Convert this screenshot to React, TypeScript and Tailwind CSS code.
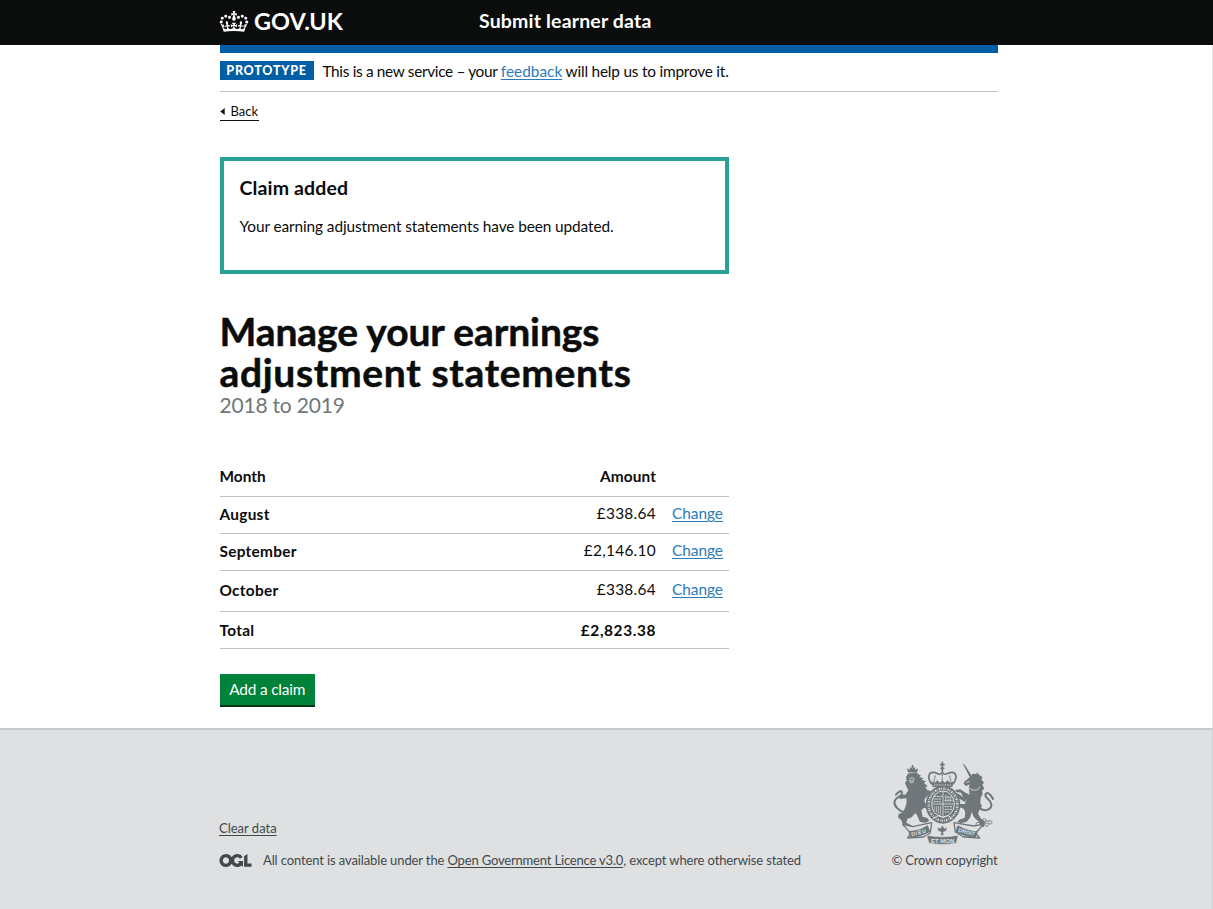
import type { ReactNode } from "react";

const rows = [
  { month: "August", amount: "£338.64", height: "h-[37px]" },
  { month: "September", amount: "£2,146.10", height: "h-[37px]" },
  { month: "October", amount: "£338.64", height: "h-[41px]" },
];

function Link({ children, className = "" }: { children: ReactNode; className?: string }) {
  return (
    <a href="#" className={`text-[#2b7bb9] underline decoration-1 underline-offset-2 ${className}`}>
      {children}
    </a>
  );
}

function Crown() {
  return (
    <svg viewBox="0 0 132 97" className="h-[21px] w-[30px] shrink-0" fill="#fff" aria-hidden="true">
      <path d="M25 30.2c3.5 1.5 7.7-.2 9.1-3.7 1.5-3.6-.2-7.8-3.9-9.2-3.6-1.4-7.6.3-9.1 3.9-1.4 3.5.3 7.5 3.9 9zM9 39.5c3.6 1.5 7.8-.2 9.2-3.7 1.5-3.6-.2-7.8-3.9-9.1-3.6-1.5-7.6.2-9.1 3.8-1.4 3.5.3 7.5 3.8 9zM4.4 57.2c3.5 1.5 7.7-.2 9.1-3.8 1.5-3.6-.2-7.7-3.9-9.1-3.5-1.5-7.6.3-9.1 3.8-1.4 3.5.3 7.6 3.9 9.1zm38.3-21.4c3.5 1.5 7.7-.2 9.1-3.8 1.5-3.6-.2-7.7-3.9-9.1-3.6-1.5-7.6.3-9.1 3.8-1.3 3.6.4 7.7 3.9 9.1zm64.4-5.6c-3.6 1.5-7.8-.2-9.1-3.7-1.5-3.6.2-7.8 3.8-9.2 3.6-1.4 7.7.3 9.2 3.9 1.3 3.5-.4 7.5-3.9 9zm15.9 9.3c-3.6 1.5-7.7-.2-9.1-3.7-1.5-3.6.2-7.8 3.7-9.1 3.6-1.5 7.7.2 9.2 3.8 1.5 3.5-.3 7.5-3.8 9zm4.7 17.7c-3.6 1.5-7.8-.2-9.2-3.8-1.5-3.6.2-7.7 3.9-9.1 3.6-1.5 7.7.3 9.2 3.8 1.3 3.5-.4 7.6-3.9 9.1zM89.3 35.8c-3.6 1.5-7.8-.2-9.2-3.8-1.4-3.6.2-7.7 3.9-9.1 3.6-1.5 7.7.3 9.2 3.8 1.4 3.6-.3 7.7-3.9 9.1zM69.7 17.7l8.9 4.7V9.3l-8.9 2.8c-.2-.3-.5-.6-.9-.9L72.4 0H59.6l3.5 11.2c-.3.3-.6.5-.9.9l-8.8-2.8v13.1l8.8-4.7c.3.3.6.7.9.9l-5 15.4v.1c-.2.8-.4 1.6-.4 2.4 0 4.1 3.1 7.5 7 8.1h.2c.3 0 .7.1 1 .1.4 0 .7 0 1-.1h.2c4-.6 7.1-4.1 7.1-8.1 0-.8-.1-1.7-.4-2.4V34l-5.1-15.4c.4-.2.7-.6 1-.9zM66 92.8c16.9 0 32.8 1.1 47.1 3.2 4-16.9 8.9-26.7 14-33.5l-9.6-3.4c1 4.9 1.1 7.2 0 10.2-1.5-1.4-3-4.3-4.2-8.7L108.6 76c2.8-2 5-3.2 7.5-3.3-4.4 9.4-10 11.9-13.6 11.2-4.3-.8-6.3-4.6-5.6-7.9 1-4.7 5.7-5.9 8-.5 4.3-8.7-3-11.4-7.6-8.8 7.1-7.2 7.9-13.5 2.1-21.1-8 6.1-8.1 12.3-4.5 20.8-4.7-5.4-12.1-2.5-9.5 6.2 3.4-5.2 7.9-2 7.2 3.1-.6 4.3-6.4 7.8-13.5 7.2-10.3-.9-10.9-8-11.2-13.8 2.5-.5 7.1 1.8 11 7.3L80.2 60c-4.1 4.4-8 5.3-12.3 5.4 1.4-4.4 8-11.6 8-11.6H55.5s6.4 7.2 7.9 11.6c-4.2-.1-8-1-12.3-5.4l1.4 16.4c3.9-5.5 8.5-7.7 10.9-7.3-.3 5.8-.9 12.8-11.1 13.8-7.2.6-12.9-2.9-13.5-7.2-.7-5 3.8-8.3 7.1-3.1 2.7-8.7-4.6-11.6-9.4-6.2 3.7-8.5 3.6-14.7-4.6-20.8-5.8 7.6-5 13.9 2.2 21.1-4.7-2.6-11.9.1-7.7 8.8 2.3-5.5 7.1-4.2 8.1.5.7 3.3-1.3 7.1-5.7 7.9-3.5.7-9-1.8-13.5-11.2 2.5.1 4.7 1.3 7.5 3.3l-4.7-15.4c-1.2 4.4-2.7 7.2-4.3 8.7-1.1-3-.9-5.3 0-10.2l-9.5 3.4c5 6.9 9.9 16.7 14 33.5 14.8-2.1 30.8-3.2 47.7-3.2z" />
    </svg>
  );
}

function OglLogo() {
  return (
    <svg viewBox="0 0 483.2 195.7" className="h-[13px] w-[33px] shrink-0" fill="#43494b" aria-hidden="true">
      <path d="M421.5 142.8V.1l-50.7 32.3v161.1h112.4v-50.7zm-122.3-9.6A47.12 47.12 0 0 1 221 97.8c0-26 21.1-47.1 47.1-47.1 16.7 0 31.4 8.7 39.7 21.8l42.7-27.2A97.63 97.63 0 0 0 268.1 0c-36.5 0-68.3 20.1-85.1 49.7A98 98 0 0 0 97.8 0C43.9 0 0 43.9 0 97.8s43.9 97.8 97.8 97.8c36.5 0 68.3-20.1 85.1-49.7a97.76 97.76 0 0 0 149.6 25.4l19.4 22.2h3v-87.8h-80l24.3 27.5zM97.8 145c-26 0-47.1-21.1-47.1-47.1s21.1-47.1 47.1-47.1 47.1 21.1 47.1 47.1S123.8 145 97.8 145" />
    </svg>
  );
}

/* Royal coat of arms: lion and unicorn supporting a crowned shield over a motto ribbon. */
function Crest() {
  return (
    <svg viewBox="24 15 312 255" className="-ml-[2px] h-[85px] w-[104px]" aria-hidden="true">
      {/* supporters' tails */}
      <g fill="none" stroke="#6f777b" strokeWidth="6" strokeLinecap="round">
        <path d="M58 172C44 166 28 152 32 138C36 124 54 126 54 113C54 106 46 106 36 119" />
        <path d="M288 160C304 172 324 162 322 148C320 132 302 130 304 119C308 110 317 114 327 132" />
      </g>
      {/* lion */}
      <g fill="#6f777b">
        <path d="M72 52L69 40L76 44L79 36L85 41L92 36L94 44L102 40L99 53Z" />
        <path d="M83 30h5v10h-5z" />
        <path d="M73 55L98 54L111 62L106 66L119 70L113 74L126 79L120 84L131 94L124 97L132 108L124 113L130 124L120 130L123 145L138 152L148 160L141 166L120 158L112 166L116 185L129 188L136 197L125 203L108 201L99 181L94 174L83 187L70 192L67 203L82 211L86 218L58 214L52 196L42 187L44 177L53 174L62 162L68 143L67 130L49 132L42 126L52 118L64 119L73 106L69 98L63 84L68 77L66 67Z" />
        <path d="M104 126L118 112L134 106L145 111L135 118L126 126L117 140L105 139Z" />
      </g>
      <path d="M76 71l10-3 5 5-7 5-8-1 6 7 8-4" stroke="#dee0e2" strokeWidth="2.5" fill="none" />
      {/* unicorn */}
      <g fill="#6f777b">
        <path d="M236 25L242 29L265 65L257 67Z" />
        <path d="M257 67L266 56L278 57L278 51L286 60L296 67L292 73L300 83L295 89L301 101L294 107L296 116L290 129L289 143L294 154L286 165L282 176L290 190L303 200L300 215L279 220L276 213L290 208L285 201L270 187L263 171L258 188L248 200L230 205L220 200L226 194L242 188L244 172L239 161L224 156L216 151L229 147L243 147L247 132L237 126L231 113L218 111L213 105L229 103L242 112L257 119L254 97L258 88L246 93L239 87L241 80Z" />
        <path d="M229 133L216 123L213 115L223 116L237 126L250 129L242 141Z" />
      </g>
      <path d="M253 98L265 105L280 105L288 95M247 83l10-4" fill="none" stroke="#dee0e2" strokeWidth="2.5" />
      <g fill="none" stroke="#6f777b" strokeWidth="2.5">
        <circle cx="282" cy="208" r="6" />
        <circle cx="295" cy="207" r="5" />
        <circle cx="308" cy="209" r="5" />
        <circle cx="301" cy="196" r="5" />
        <circle cx="319" cy="202" r="5" />
        <path d="M286 190l16 11 12-5" />
      </g>
      {/* royal crown */}
      <g stroke="#6f777b" fill="none">
        <path d="M175 20V48M168 29H182M169 40H181" strokeWidth="5" />
        <path d="M143 88C126 62 137 49 153 53C163 56 170 63 175 51C181 63 187 56 198 53C214 48 224 64 207 88" strokeWidth="5" />
        <path d="M175 53V81M154 62L149 82M197 62L201 82" strokeWidth="4" strokeDasharray="4 2" />
      </g>
      <path fill="#6f777b" d="M141 79L152 83L160 76L168 83L175 76L183 83L190 76L199 83L209 79L205 96H146Z" />
      <path d="M149 90H201" stroke="#dee0e2" strokeWidth="2.5" strokeDasharray="5 3" />
      {/* garter and shield */}
      <ellipse cx="177" cy="149" rx="52" ry="57" fill="#6f777b" />
      <ellipse cx="177" cy="149" rx="43" ry="48" fill="none" stroke="#dee0e2" strokeWidth="7" strokeDasharray="2 4 4 3" />
      <ellipse cx="177" cy="147" rx="34" ry="39" fill="#6f777b" stroke="#dee0e2" strokeWidth="3" />
      <path d="M177 109V185M145 147H209" stroke="#dee0e2" strokeWidth="2.5" />
      <g stroke="#dee0e2" fill="none" strokeWidth="3">
        <path d="M151 124H173M149 132H173M149 140H173" strokeDasharray="6 2" />
        <path d="M185 119V142M192 122V143M199 126V142M182 126H205M181 136H207" strokeWidth="2" />
        <path d="M152 154V166M158 153V173M164 153V178M170 153V181" strokeWidth="2" />
        <path d="M182 155H206M182 163H204M182 171H199" strokeDasharray="6 2" />
        <path d="M147 191L165 181L177 188L191 181L205 191" />
      </g>
      {/* motto ribbon */}
      <path d="M56 208L86 215L143 203L139 234L118 246L71 249L81 235Z" fill="#dee0e2" stroke="#6f777b" strokeWidth="4" strokeLinejoin="round" />
      <path d="M298 208L269 213L210 203L214 231L239 246L287 249L275 234Z" fill="#dee0e2" stroke="#6f777b" strokeWidth="4" strokeLinejoin="round" />
      <path d="M73 229Q107 227 131 211L139 230Q113 245 79 248Z" fill="#6f777b" />
      <path d="M221 211Q248 227 281 230L275 249Q241 245 214 230Z" fill="#6f777b" />
      <path d="M128 241Q176 250 223 241L217 265Q176 272 135 265Z" fill="#6f777b" stroke="#dee0e2" strokeWidth="2" />
      <path d="M175 210l6 10 9-3-4 12-8 2 2 10h-11l2-10-8-2-4-12 10 3z" fill="#6f777b" stroke="#dee0e2" strokeWidth="2" />
      <g fill="#dee0e2" fontFamily="Liberation Sans, sans-serif" fontWeight="700">
        <text x="83" y="244" fontSize="16" transform="rotate(-15 83 244)" textLength="45">DIEU</text>
        <text x="141" y="263" fontSize="18" textLength="70">ET MON</text>
        <text x="222" y="230" fontSize="16" transform="rotate(15 222 230)" textLength="50">DROIT</text>
      </g>
    </svg>
  );
}

export default function App() {
  return (
    <div className="flex h-[909px] w-[1213px] flex-col overflow-hidden bg-white font-['Lato','Noto_Sans',sans-serif] text-[15.4px] leading-[20px] text-[#0b0c0c]">
      <header className="flex h-[45px] shrink-0 items-center bg-[#0b0c0c] pl-[219px] text-white">
        <div className="flex w-[260px] items-center gap-[5px] pb-[3px]">
          <Crown />
          <span className="text-[23.5px] leading-[24px] font-bold">GOV.UK</span>
        </div>
        <span className="pb-[3px] text-[19.5px] leading-[24px] font-bold tracking-[0.17px]">Submit learner data</span>
      </header>

      <div className="flex min-h-0 flex-1 flex-col border-r border-[#e3e4e5]">
        <div className="ml-[219.5px] flex w-[778px] flex-col">
          <div className="h-2 bg-[#005ea5]" />
          <div className="flex h-[39px] items-center border-b border-[#bfc1c3] pb-[3px]">
            <strong className="flex h-[19px] w-[94px] items-center justify-center bg-[#005ea5] text-[12.5px] leading-[16px] font-black tracking-[0.75px] text-white">
              PROTOTYPE
            </strong>
            <p className="mt-px ml-[9px] whitespace-nowrap">
              <span className="tracking-[-0.34px]">This is a new service – your </span>
              <Link>feedback</Link>
              <span className="tracking-[-0.21px]"> will help us to improve it.</span>
            </p>
          </div>
          <a href="#" className="mt-[10px] flex h-[19px] w-[39.5px] items-center border-b border-[#0b0c0c] text-[13px] leading-[16px]">
            <svg viewBox="0 0 5 8" className="mr-[6px] h-[7px] w-[5px] shrink-0" aria-hidden="true">
              <path d="M5 0V8L0 4Z" fill="#0b0c0c" />
            </svg>
            Back
          </a>

          <section className="mt-[36px] h-[117px] w-[509.5px] border-4 border-[#28a197] px-4 pt-[15px]">
            <h2 className="text-[19.5px] leading-[24px] font-bold tracking-[0.14px]">Claim added</h2>
            <p className="mt-[16px] tracking-[-0.1px]">Your earning adjustment statements have been updated.</p>
          </section>

          <h1 className="mt-[37px] flex flex-col text-[39px] leading-[40.5px] font-bold [-webkit-text-stroke:0.5px_#0b0c0c]">
            <span className="tracking-[-0.1px]">Manage your earnings</span>
            <span className="tracking-[0.67px]">adjustment statements</span>
          </h1>
          <p className="mt-px text-[21px] leading-[24px] tracking-[-0.2px] text-[#6f777b]">2018 to 2019</p>

          <div className="mt-[41px] flex w-[509.5px] flex-col" role="table">
            <div className="flex h-[39px] items-center border-b border-[#bfc1c3] pb-[2px] font-bold" role="row">
              <span className="flex-1">Month</span>
              <span className="mr-[73px] tracking-[0.1px]">Amount</span>
            </div>
            {rows.map((row) => (
              <div key={row.month} className={`flex items-center border-b border-[#bfc1c3] pb-[2px] ${row.height}`} role="row">
                <span className="flex-1 font-bold tracking-[0.28px]">{row.month}</span>
                <span className="pb-[2px] tracking-[0.27px]">{row.amount}</span>
                <Link className="mr-[6px] ml-[16px] pb-[2px]">Change</Link>
              </div>
            ))}
            <div className="flex h-[37px] items-center border-b border-[#bfc1c3] pb-px font-bold" role="row">
              <span className="flex-1 tracking-[0.3px]">Total</span>
              <span className="mr-[73px] tracking-[0.6px]">£2,823.38</span>
            </div>
          </div>

          <button className="mt-[25px] flex h-[33px] w-[95.5px] items-center justify-center border-b-2 border-[#003618] bg-[#00823b] pb-px tracking-[-0.18px] whitespace-nowrap text-white">
            Add a claim
          </button>
        </div>
      </div>

      <footer className="flex h-[181px] shrink-0 border-t-2 border-r border-t-[#c6c9cd] border-r-[#d0d3d6] bg-[#dee0e2] pl-[219px] text-[13px] leading-[16px] text-[#43494b]">
        <div className="flex w-[672px] flex-col pt-[90px]">
          <a href="#" className="self-start underline underline-offset-2">Clear data</a>
          <div className="mt-[16px] flex items-center whitespace-nowrap">
            <OglLogo />
            <p className="ml-[11px]">
              <span className="tracking-[-0.12px]">All content is available under the </span>
              <a href="#" className="tracking-[-0.17px] underline underline-offset-2">Open Government Licence v3.0</a>
              <span className="tracking-[-0.12px]">, except where otherwise stated</span>
            </p>
          </div>
        </div>
        <div className="flex w-[107px] flex-col items-center pt-[30px]">
          <Crest />
          <span className="mt-[7px] tracking-[-0.17px] whitespace-nowrap">© Crown copyright</span>
        </div>
      </footer>
    </div>
  );
}
